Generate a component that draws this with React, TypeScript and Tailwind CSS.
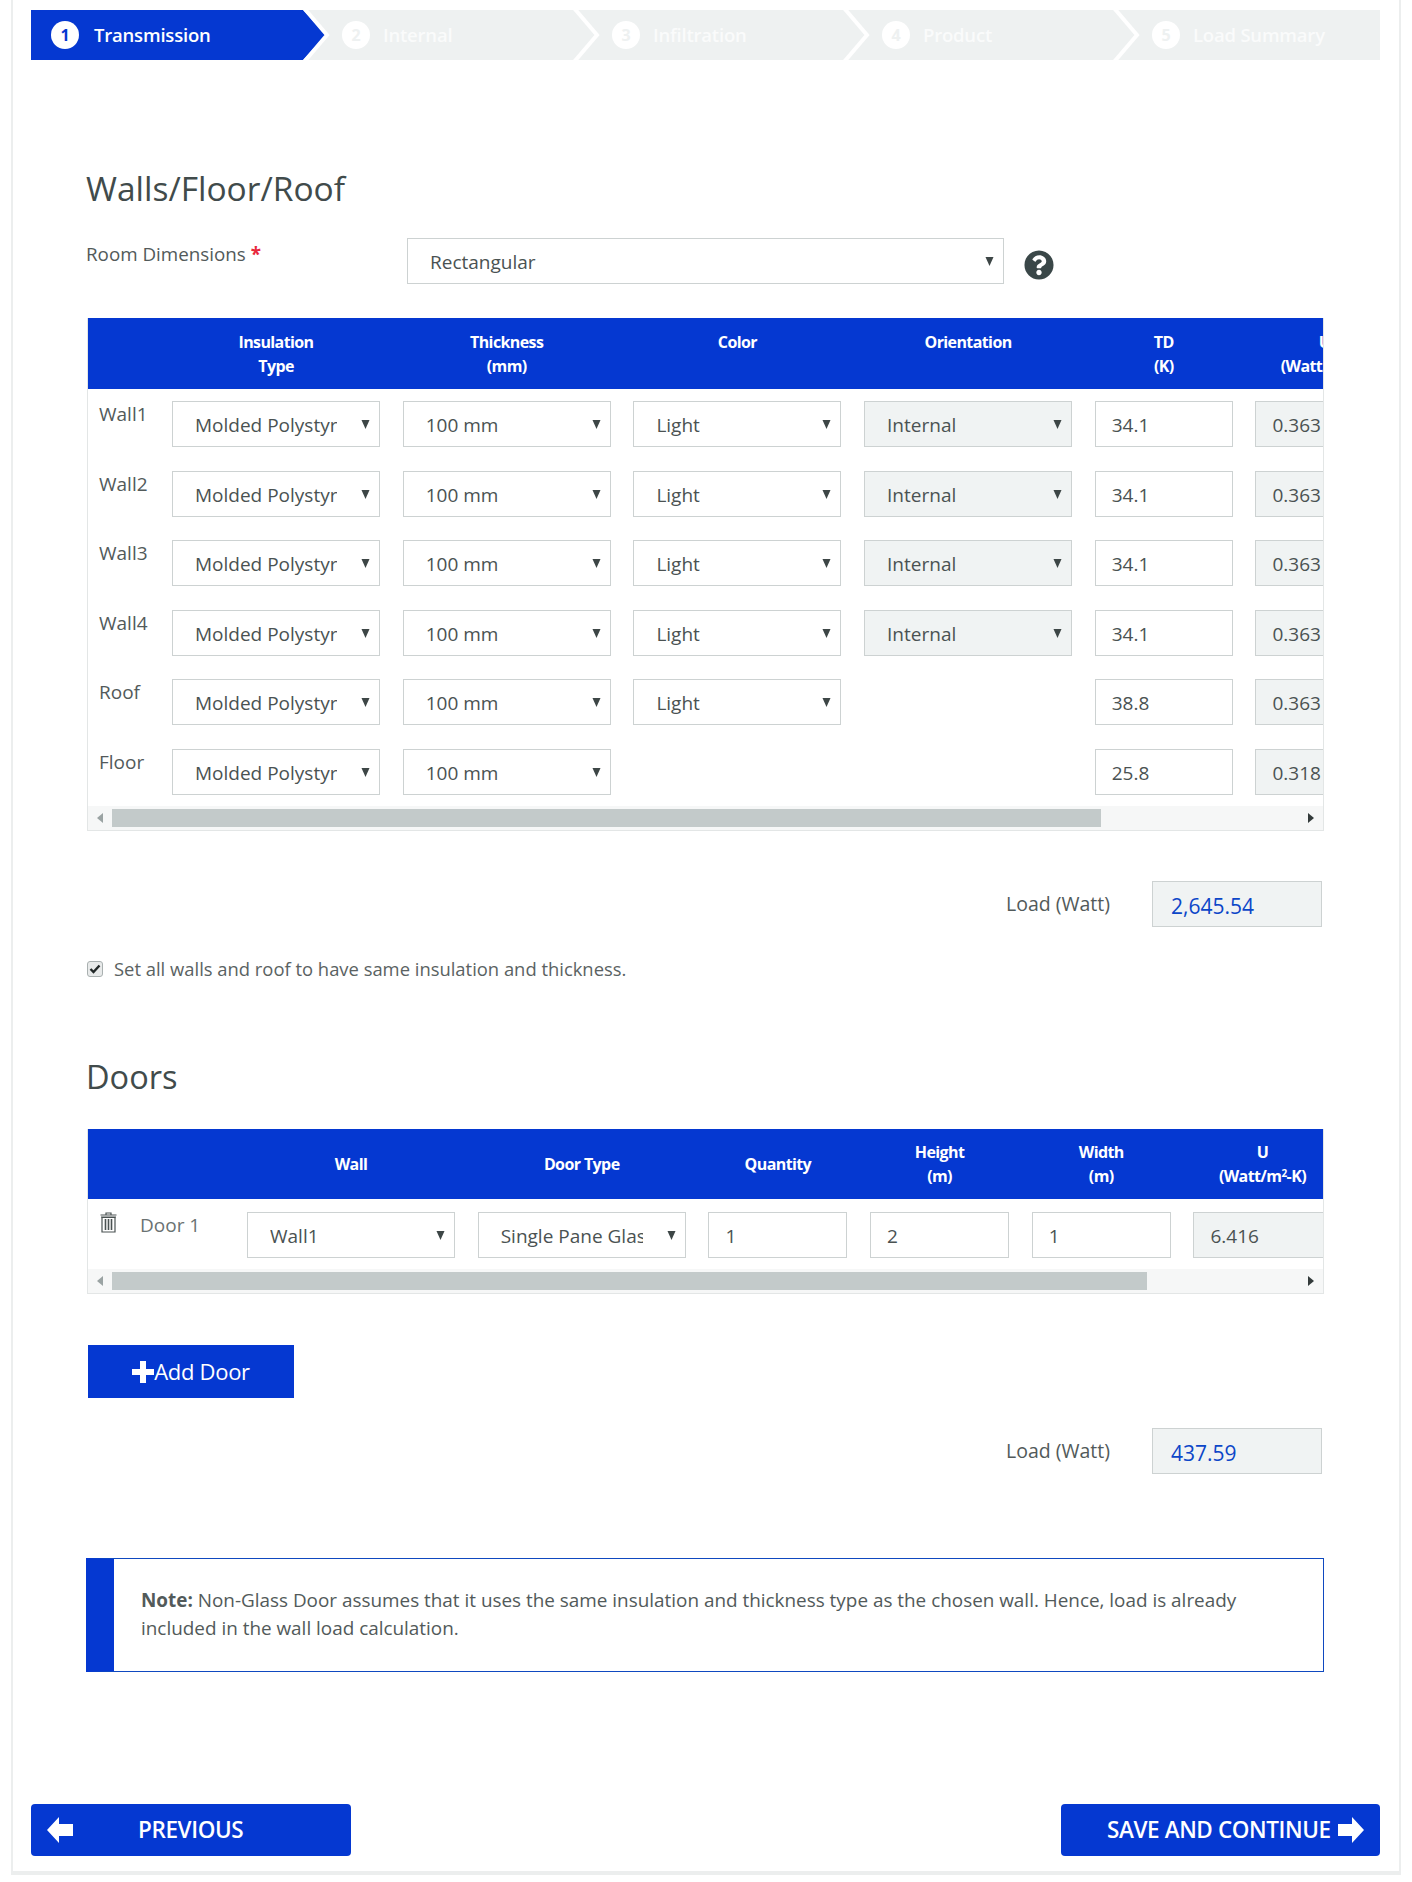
import React from "react";
import { FaQuestionCircle } from "react-icons/fa";

const FONT = "font-['Open_Sans',sans-serif]";

const steps = ["Transmission", "Internal", "Infiltration", "Product", "Load Summary"];

const wallRows = [
  { label: "Wall1", color: true, orientation: true, td: "34.1", u: "0.363" },
  { label: "Wall2", color: true, orientation: true, td: "34.1", u: "0.363" },
  { label: "Wall3", color: true, orientation: true, td: "34.1", u: "0.363" },
  { label: "Wall4", color: true, orientation: true, td: "34.1", u: "0.363" },
  { label: "Roof", color: true, orientation: false, td: "38.8", u: "0.363" },
  { label: "Floor", color: false, orientation: false, td: "25.8", u: "0.318" },
];

function Arrow() {
  return (
    <svg width="9" height="9" viewBox="0 0 9 9" className="absolute right-[9px] top-[18px]">
      <polygon points="0.5,0 8.5,0 4.5,9" fill="#3d4646" />
    </svg>
  );
}

function Select({ value, width = "w-[208px]", textWidth = "w-[142px]", disabled = false }: { value: string; width?: string; textWidth?: string; disabled?: boolean }) {
  return (
    <div className={`relative h-[46px] shrink-0 border border-[#cdd2d2] pl-[22px] pt-[2px] leading-[42px] text-[19px] text-[#4a5252] ${width} ${disabled ? "bg-[#f0f3f3]" : "bg-white"}`}>
      <div className={`overflow-hidden whitespace-nowrap ${textWidth}`}>{value}</div>
      <Arrow />
    </div>
  );
}

function Input({ value, width = "w-[138px]", disabled = false }: { value: string; width?: string; disabled?: boolean }) {
  return (
    <div className={`h-[46px] shrink-0 border border-[#cdd2d2] pl-[16px] pt-[2px] leading-[42px] text-[19px] text-[#4a5252] ${width} ${disabled ? "bg-[#f0f3f3]" : "bg-white"}`}>
      {value}
    </div>
  );
}

function HeadCell({ width, lines }: { width: string; lines: React.ReactNode[] }) {
  return (
    <div className={`shrink-0 text-center ${width}`}>
      {lines.map((line, i) => (
        <div key={i} className="whitespace-nowrap">{line}</div>
      ))}
    </div>
  );
}

function Scrollbar({ thumb }: { thumb: string }) {
  return (
    <div className="flex h-[24px] items-center bg-[#f6f7f7]">
      <div className="flex w-[24px] shrink-0 justify-center">
        <svg width="6" height="10" viewBox="0 0 6 10"><polygon points="6,0 6,10 0,5" fill="#9aa3a3" /></svg>
      </div>
      <div className={`h-[18px] bg-[#c3caca] ${thumb}`} />
      <div className="flex-1" />
      <div className="flex w-[24px] shrink-0 justify-center">
        <svg width="6" height="10" viewBox="0 0 6 10"><polygon points="0,0 6,5 0,10" fill="#333b3b" /></svg>
      </div>
    </div>
  );
}

function LoadRow({ value, className }: { value: string; className: string }) {
  return (
    <div className={`flex items-center justify-end pr-[2px] ${className}`}>
      <span className="text-[19.5px] text-[#525a5a]">Load (Watt)</span>
      <div className="ml-[42px] h-[46px] w-[170px] border border-[#cdd2d2] bg-[#f0f3f3] pl-[18px] pt-[3px] text-[21px] leading-[42px] text-[#0c46c8]">
        {value}
      </div>
    </div>
  );
}

export default function App() {
  return (
    <div className={`h-[1882px] w-[1412px] bg-white pb-[7px] pl-[11px] pr-[11px] text-[#4a5252] ${FONT}`}>
      <div className="flex h-full flex-col border-x-2 border-b-4 border-[#eceeee] bg-white pl-[18px] pr-[18px] pt-[10px]">
        {/* Steps */}
        <div className="flex h-[50px] w-[1349px] bg-[#eef1f1] text-[18.5px] font-semibold">
          {steps.map((step, i) => (
            <div
              key={step}
              className={`relative flex h-full shrink-0 items-center ${i === 0 ? "w-[291px]" : "w-[270px]"} ${i === 4 ? "!w-[248px]" : ""} ${i === 0 ? "text-white" : "text-[#fafbfb]"}`}
            >
              {i === 0 && (
                <div className="absolute left-0 top-0 h-full w-[295px] bg-[#0538d1] [clip-path:polygon(0_0,272px_0,295px_50%,272px_100%,0_100%)]" />
              )}
              <div className={`relative ml-[20px] flex h-[28px] w-[28px] items-center justify-center rounded-full bg-white text-[16px] font-bold ${i === 0 ? "text-[#0538d1]" : "text-[#eef1f1]"}`}>
                {i + 1}
              </div>
              <span className={`relative tracking-[-0.2px] ${i === 0 ? "ml-[15px]" : "ml-[13px]"}`}>{step}</span>
              {i < 4 && (
                <svg width="30" height="50" viewBox="0 0 30 50" className="absolute right-[-9px] top-0">
                  <polyline points="3,-2 26,25 3,52" fill="none" stroke="#fff" strokeWidth="4" />
                </svg>
              )}
            </div>
          ))}
        </div>

        <div className="ml-[55px] flex w-[1238px] flex-col">
          <h2 className="mt-[106px] text-[33.5px] leading-[44px] text-[#414b4b]">Walls/Floor/Roof</h2>

          <div className="mt-[28px] flex">
            <label className="w-[321px] shrink-0 pt-[2px] text-[18.8px] leading-[28px] text-[#525a5a]">
              Room Dimensions <span className="font-bold text-[#e8283c]">*</span>
            </label>
            <Select value="Rectangular" width="w-[597px]" textWidth="w-[400px]" />
            <FaQuestionCircle className="ml-[20px] mt-[12px] text-[30px] text-[#3a4748]" />
          </div>

          {/* Walls table */}
          <div className="ml-[1px] mt-[34px] w-[1237px] overflow-hidden border-x border-b border-[#e3e6e6]">
            <div className="flex h-[71px] items-center bg-[#0538d1] text-[16px] font-bold leading-[24px] tracking-[-0.6px] text-white">
              <div className="w-[84px] shrink-0" />
              <div className="flex gap-[22.7px]">
                <HeadCell width="w-[208px]" lines={["Insulation", "Type"]} />
                <HeadCell width="w-[208px]" lines={["Thickness", "(mm)"]} />
                <div className="w-[208px] shrink-0 self-start text-center">Color</div>
                <div className="w-[208px] shrink-0 self-start text-center">Orientation</div>
                <HeadCell width="w-[138px]" lines={["TD", "(K)"]} />
                <HeadCell width="w-[138px]" lines={["U", "(Watt/m²-K)"]} />
              </div>
            </div>
            <div className="h-[417px] overflow-hidden pt-[12px]">
              {wallRows.map((row) => (
                <div key={row.label} className="flex h-[69.6px]">
                  <div className="w-[84px] shrink-0 pl-[11px] text-[19px] leading-[26px] text-[#525a5a]">{row.label}</div>
                  <div className="flex gap-[22.7px]">
                    <Select value="Molded Polystyrene" />
                    <Select value="100 mm" />
                    {row.color ? <Select value="Light" /> : <div className="w-[208px] shrink-0" />}
                    {row.orientation ? <Select value="Internal" disabled /> : <div className="w-[208px] shrink-0" />}
                    <Input value={row.td} />
                    <Input value={row.u} disabled />
                  </div>
                </div>
              ))}
            </div>
            <Scrollbar thumb="w-[989px]" />
          </div>

          <LoadRow value="2,645.54" className="mt-[50px]" />

          <div className="mt-[30px] flex h-[24px] items-center text-[18.4px] text-[#5a6262]">
            <div className="ml-[1px] flex h-[16px] w-[16px] shrink-0 items-center justify-center rounded-[3px] border border-[#a9b0b0] bg-[#e8eaea]">
              <svg width="12" height="10" viewBox="0 0 12 10" fill="none" stroke="#222828" strokeWidth="2.4"><path d="M1.5 5l3 3L10.5 1.5" /></svg>
            </div>
            <span className="ml-[11px]">Set all walls and roof to have same insulation and thickness.</span>
          </div>

          <h2 className="mt-[74px] text-[32.5px] leading-[44px] text-[#414b4b]">Doors</h2>

          {/* Doors table */}
          <div className="ml-[1px] mt-[30px] w-[1237px] overflow-hidden border-x border-b border-[#e3e6e6]">
            <div className="flex h-[70px] items-center bg-[#0538d1] text-[16px] font-bold leading-[24px] tracking-[-0.6px] text-white">
              <div className="w-[159px] shrink-0" />
              <div className="flex items-center gap-[22.7px]">
                <HeadCell width="w-[208px]" lines={["Wall"]} />
                <HeadCell width="w-[208px]" lines={["Door Type"]} />
                <HeadCell width="w-[139px]" lines={["Quantity"]} />
                <HeadCell width="w-[139px]" lines={["Height", "(m)"]} />
                <HeadCell width="w-[139px]" lines={["Width", "(m)"]} />
                <HeadCell width="w-[138px]" lines={["U", <>(Watt/m<sup className="text-[10px]">2</sup>-K)</>]} />
              </div>
            </div>
            <div className="flex h-[70px] pt-[13px]">
              <div className="flex w-[159px] shrink-0 items-start pl-[12px]">
                <svg width="17" height="21" viewBox="0 0 17 21" fill="none" stroke="#4a5252" strokeWidth="1.2" className="shrink-0">
                  <path d="M6 2.5V1h5v1.5M0.5 3h16M1 5h15" />
                  <path d="M2 5.5h13V20H2z" />
                  <path d="M5.5 7v11M8.5 7v11M11.5 7v11" strokeWidth="1.6" />
                </svg>
                <span className="ml-[23px] pt-[1px] text-[19px] leading-[24px] text-[#6a7272]">Door 1</span>
              </div>
              <div className="flex gap-[22.7px]">
                <Select value="Wall1" />
                <Select value="Single Pane Glass" />
                <Input value="1" width="w-[139px]" />
                <Input value="2" width="w-[139px]" />
                <Input value="1" width="w-[139px]" />
                <Input value="6.416" disabled />
              </div>
            </div>
            <Scrollbar thumb="w-[1035px]" />
          </div>

          <button className="ml-[2px] mt-[51px] flex h-[53px] w-[206px] items-center justify-center bg-[#0538d1] text-[22px] tracking-[-0.3px] text-white">
            <svg width="22" height="22" viewBox="0 0 22 22" fill="#fff"><path d="M8 0h6v8h8v6h-8v8H8v-8H0V8h8z" /></svg>
            Add Door
          </button>

          <LoadRow value="437.59" className="mt-[30px]" />

          {/* Note */}
          <div className="mt-[84px] flex h-[114px] w-[1238px] border-[1.5px] border-[#0f49c0] border-l-[28px] border-l-[#0538d1] pl-[27px] pr-[30px] pt-[27px] text-[18.9px] leading-[28px] text-[#525a5a]">
            <p>
              <b className="font-bold">Note:</b> Non-Glass Door assumes that it uses the same insulation and thickness type as the chosen wall. Hence, load is already included in the wall load calculation.
            </p>
          </div>
        </div>

        <div className="mt-[132px] flex w-[1349px] justify-between">
          <button className="relative flex h-[52px] w-[320px] items-center rounded-[4px] bg-[#0538d1] pl-[107px] text-[22.5px] font-semibold tracking-[-0.4px] text-white">
            <svg width="26" height="26" viewBox="0 0 26 26" fill="#fff" className="absolute left-[16px] top-[13px]"><path d="M12 0v7h14v12H12v7L0 13z" /></svg>
            PREVIOUS
          </button>
          <button className="relative flex h-[52px] w-[319px] items-center rounded-[4px] bg-[#0538d1] pl-[46px] text-[22.5px] font-semibold tracking-[-0.4px] text-white">
            SAVE AND CONTINUE
            <svg width="26" height="26" viewBox="0 0 26 26" fill="#fff" className="absolute right-[16px] top-[13px]"><path d="M14 0v7H0v12h14v7l12-13z" /></svg>
          </button>
        </div>
      </div>
    </div>
  );
}
